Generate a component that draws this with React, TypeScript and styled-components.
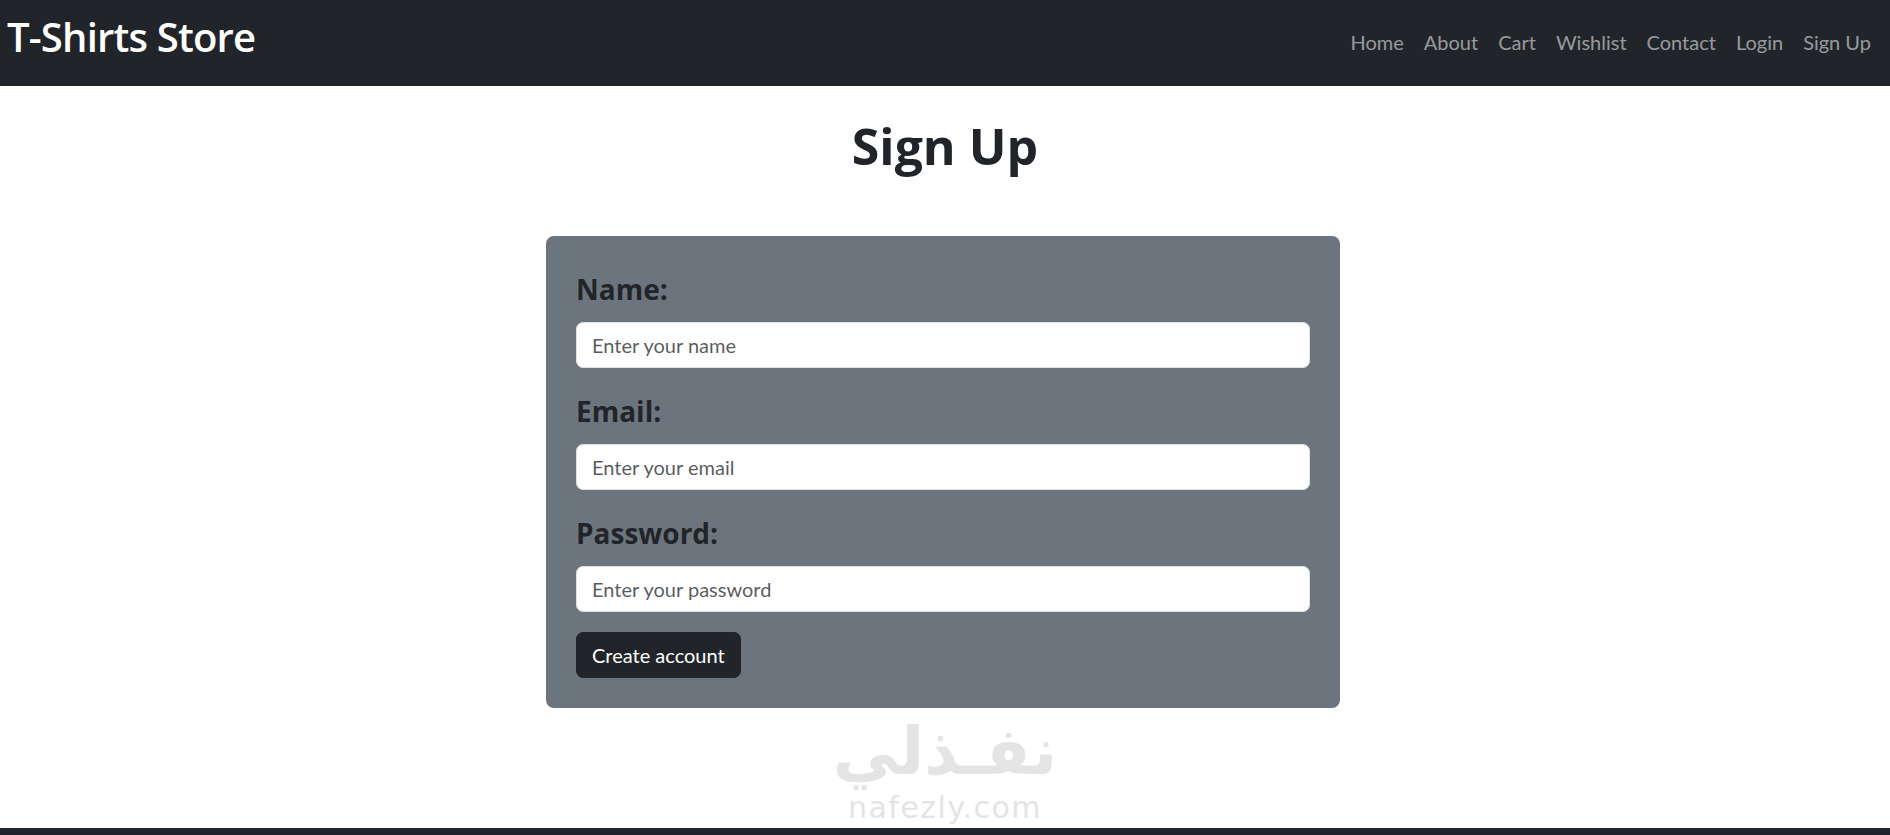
import React from "react";
import styled, { createGlobalStyle } from "styled-components";

const GlobalStyle = createGlobalStyle`
  * { box-sizing: border-box; }
  html, body { margin: 0; padding: 0; overflow: hidden; }
  body {
    font-family: Lato, "Liberation Sans", sans-serif;
    color: #212529;
    background: #ffffff;
  }
`;

const Page = styled.div`
  height: 835px;
  display: flex;
  flex-direction: column;
`;

const Navbar = styled.nav`
  height: 86px;
  flex: none;
  background: #212529;
  display: flex;
  align-items: center;
  justify-content: space-between;
  padding: 0 9px 0 7px;
`;

const Brand = styled.a`
  font-family: "Open Sans", "Liberation Sans", sans-serif;
  font-size: 40px;
  font-weight: 600;
  letter-spacing: -0.8px;
  line-height: 48px;
  color: #ffffff;
  text-decoration: none;
  margin-bottom: 12px;
`;

const NavList = styled.ul`
  display: flex;
  list-style: none;
  margin: 0 0 2px;
  padding: 0;
`;

const NavLink = styled.a`
  display: block;
  padding: 0 10px;
  font-size: 20px;
  line-height: 30px;
  color: rgba(255, 255, 255, 0.55);
  text-decoration: none;
`;

const Main = styled.main`
  flex: 1;
  display: flex;
  flex-direction: column;
  align-items: center;
  min-height: 0;
`;

const Title = styled.h1`
  font-family: "Open Sans", "Liberation Sans", sans-serif;
  font-size: 50px;
  font-weight: 700;
  line-height: 60px;
  margin: 30px 0 60px;
  color: #212529;
`;

const Card = styled.form`
  width: 794px;
  background: #6c757d;
  border-radius: 8px;
  padding: 30px;
  margin-right: 4px;
  display: flex;
  flex-direction: column;
`;

const Field = styled.div`
  display: flex;
  flex-direction: column;
  margin-bottom: 20px;
`;

const Label = styled.label`
  display: block;
  font-family: "Open Sans", "Liberation Sans", sans-serif;
  font-size: 28px;
  font-weight: 700;
  line-height: 34px;
  margin: 6px 0 16px;
  color: #212529;
`;

const Input = styled.input`
  display: block;
  width: 100%;
  height: 46px;
  border: 1px solid #dee2e6;
  border-radius: 7px;
  padding: 0 15px;
  font-family: Lato, "Liberation Sans", sans-serif;
  font-size: 20px;
  color: #212529;
  background: #ffffff;
  outline: none;
  &::placeholder {
    color: rgba(33, 37, 41, 0.75);
  }
`;

const Button = styled.button`
  align-self: flex-start;
  height: 46px;
  padding: 0 15px;
  background: #212529;
  border: 1px solid #212529;
  border-radius: 7px;
  color: #ffffff;
  font-family: Lato, "Liberation Sans", sans-serif;
  font-size: 20px;
  cursor: pointer;
`;

const Watermark = styled.div`
  flex: 1;
  display: flex;
  flex-direction: column;
  align-items: center;
  padding-top: 6px;
  user-select: none;
`;

const ArabicMark = styled.div`
  font-family: "DejaVu Sans", sans-serif;
  font-size: 66px;
  font-weight: 700;
  line-height: 76px;
  color: #e4e4e4;
  direction: rtl;
`;

const LatinMark = styled.div`
  font-family: "DejaVu Sans", sans-serif;
  font-size: 30px;
  line-height: 30px;
  letter-spacing: 1.5px;
  margin-top: 3px;
  color: #e4e4e4;
`;

const Footer = styled.footer`
  height: 7px;
  flex: none;
  background: #212529;
`;

const links = ["Home", "About", "Cart", "Wishlist", "Contact", "Login", "Sign Up"];

export default function App() {
  return (
    <>
      <GlobalStyle />
      <Page>
        <Navbar>
          <Brand href="#">T-Shirts Store</Brand>
          <NavList>
            {links.map((l) => (
              <li key={l}>
                <NavLink href="#">{l}</NavLink>
              </li>
            ))}
          </NavList>
        </Navbar>
        <Main>
          <Title>Sign Up</Title>
          <Card onSubmit={(e) => e.preventDefault()}>
            <Field>
              <Label htmlFor="name">Name:</Label>
              <Input id="name" type="text" placeholder="Enter your name" />
            </Field>
            <Field>
              <Label htmlFor="email">Email:</Label>
              <Input id="email" type="email" placeholder="Enter your email" />
            </Field>
            <Field>
              <Label htmlFor="password">Password:</Label>
              <Input id="password" type="password" placeholder="Enter your password" />
            </Field>
            <Button type="submit">Create account</Button>
          </Card>
          <Watermark>
            <ArabicMark>نفـذلي</ArabicMark>
            <LatinMark>nafezly.com</LatinMark>
          </Watermark>
        </Main>
        <Footer />
      </Page>
    </>
  );
}
